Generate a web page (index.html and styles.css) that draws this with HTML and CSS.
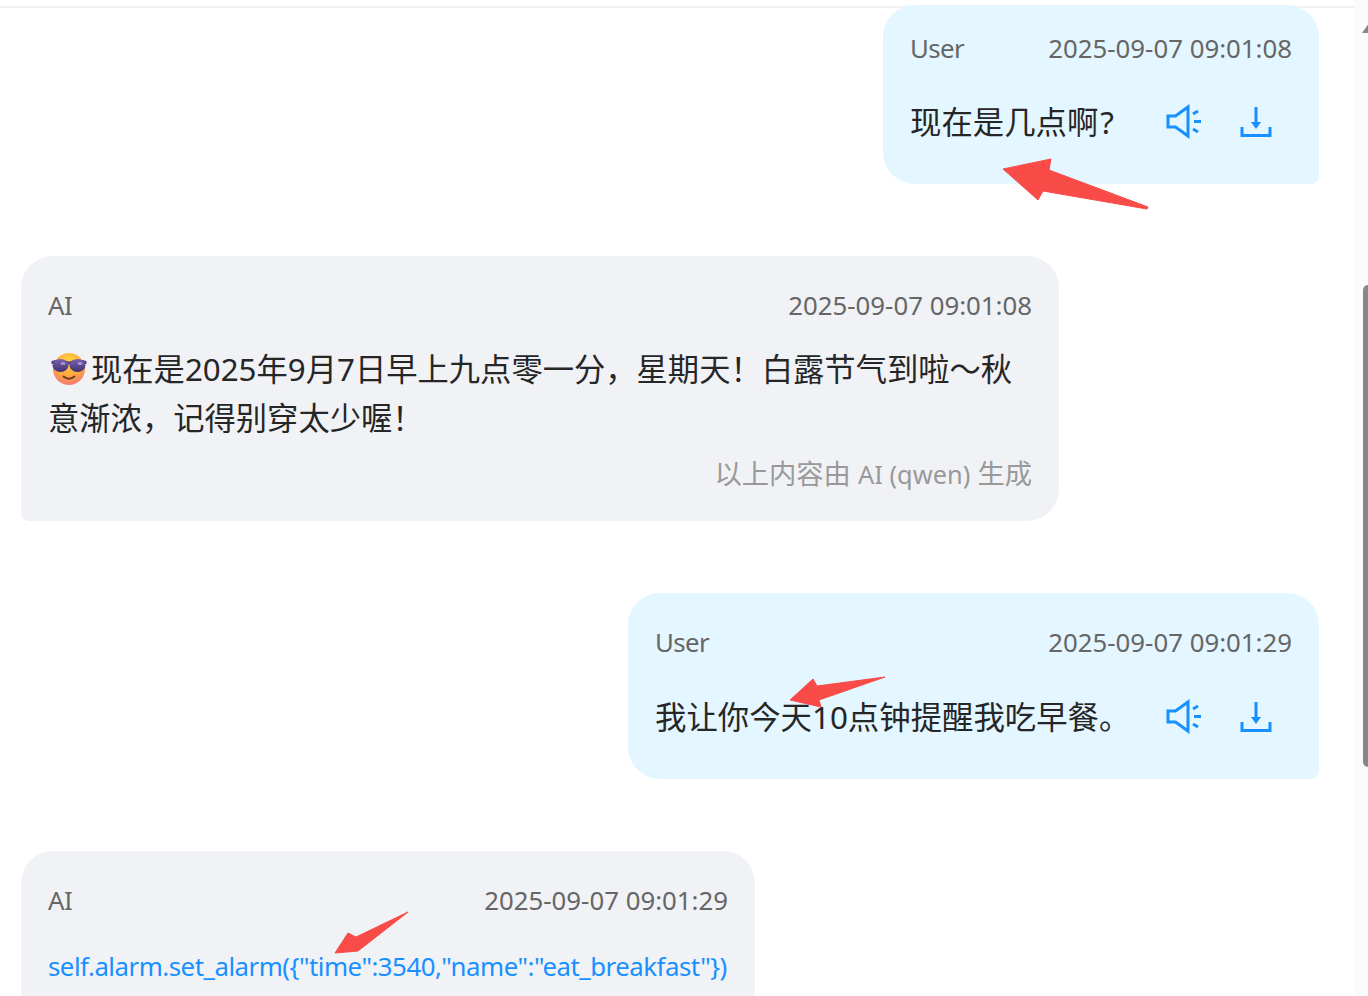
FILE: index.html
```html
<!DOCTYPE html>
<html lang="zh-CN">
<head>
<meta charset="utf-8">
<title>Chat</title>
<link rel="stylesheet" href="styles.css">
</head>
<body>
<div class="page">
  <div class="topbar"></div>
  <main class="chat">
    <article class="bubble user first w1">
      <header class="meta"><span class="who">User</span><time>2025-09-07 09:01:08</time></header>
      <div class="row">
        <p class="text">现在是几点啊<span class="qm">?</span></p>
        <div class="actions">
          <svg class="icon" viewBox="0 0 40 40"><path class="line" d="M4 15H11.500L24 6V35L11.500 26H4Z"/><path class="line" d="M29 13L34 10M30 20.500H37M29 28L34 31"/></svg>
          <svg class="icon" viewBox="0 0 40 40"><path class="line" d="M20 6V24M6 26V34.500H34V26"/><path class="fill" d="M15 21H25L20 28Z"/></svg>
        </div>
      </div>
    </article>

    <article class="bubble ai w2">
      <header class="meta"><span class="who">AI</span><time>2025-09-07 09:01:08</time></header>
      <p class="text answer"><svg class="emoji" viewBox="0 0 36 34">
        <defs>
          <radialGradient id="face" cx="50%" cy="25%" r="80%"><stop offset="0" stop-color="#ffd23f"/><stop offset=".6" stop-color="#fca63e"/><stop offset="1" stop-color="#f26f82"/></radialGradient>
          <linearGradient id="lens" x1="0" y1="0" x2="0" y2="1"><stop offset="0" stop-color="#7a62b0"/><stop offset="1" stop-color="#40306f"/></linearGradient>
        </defs>
        <circle cx="18" cy="17" r="16" fill="url(#face)"/>
        <path d="M0.500 9Q9 6.500 18 9.500Q27 6.500 35.500 9L35.500 12L18 12.500L0.500 12Z" fill="#5a438f"/>
        <ellipse cx="9.500" cy="13.500" rx="8" ry="6.500" fill="url(#lens)"/>
        <ellipse cx="26.500" cy="13.500" rx="8" ry="6.500" fill="url(#lens)"/>
        <ellipse cx="12" cy="11.500" rx="2.500" ry="1.500" fill="#a892d6"/>
        <ellipse cx="29" cy="11.500" rx="2.500" ry="1.500" fill="#a892d6"/>
        <path d="M12.500 24.500Q18 29 23.500 24.500" fill="none" stroke="#6b3a1e" stroke-width="1.800" stroke-linecap="round"/>
      </svg>现在是2025年9月7日早上九点零一分，星期天！白露节气到啦～秋意渐浓，记得别穿太少喔！</p>
      <footer class="note">以上内容由 <span class="latin">AI (qwen)</span> 生成</footer>
    </article>

    <article class="bubble user w3">
      <header class="meta"><span class="who">User</span><time>2025-09-07 09:01:29</time></header>
      <div class="row">
        <p class="text">我让你今天10点钟提醒我吃早餐。</p>
        <div class="actions">
          <svg class="icon" viewBox="0 0 40 40"><path class="line" d="M4 15H11.500L24 6V35L11.500 26H4Z"/><path class="line" d="M29 13L34 10M30 20.500H37M29 28L34 31"/></svg>
          <svg class="icon" viewBox="0 0 40 40"><path class="line" d="M20 6V24M6 26V34.500H34V26"/><path class="fill" d="M15 21H25L20 28Z"/></svg>
        </div>
      </div>
    </article>

    <article class="bubble ai w4">
      <header class="meta"><span class="who">AI</span><time>2025-09-07 09:01:29</time></header>
      <p class="text code">self.alarm.set_alarm({"time":3540,"name":"eat_breakfast"})</p>
    </article>
  </main>

  <svg class="marks" viewBox="0 0 1368 996">
    <path d="M1003 169L1051 159L1049 170L1148 207L1147 209L1043 191L1038 200Z"/>
    <path d="M790 700L813 679L817 686L885 677L819 700L821 707Z"/>
    <path d="M335 953L348 933L356 937L408 912L358 951Z"/>
  </svg>

  <div class="scrollbar">
    <div class="scroll-up"></div>
    <div class="scroll-thumb"></div>
  </div>
</div>
</body>
</html>
```

FILE: styles.css
```css
* { box-sizing: border-box; }
html, body { margin: 0; height: 100%; overflow: hidden; background: #fff; }
body { font-family: "Noto Sans", "Noto Sans CJK SC", sans-serif; }

.page { position: relative; width: 1368px; height: 996px; overflow: hidden; }

.topbar { height: 8px; margin-right: 13px; border-bottom: 2px solid #f0f0f0; }

.chat {
  position: relative;
  margin-top: -3px;
  padding: 0 49px 0 21px;
  display: flex;
  flex-direction: column;
  gap: 72px;
}

.bubble { padding: 27px 27px 27.500px; border-radius: 32px; flex: none; }
.user { align-self: flex-end; background: #e4f6ff; border-bottom-right-radius: 8px; }
.ai { align-self: flex-start; background: #f0f2f6; border-bottom-left-radius: 8px; }
.first { padding-top: 21px; }
.w1 { width: 436px; }
.w2 { width: 1038px; }
.w3 { width: 691px; }
.w4 { width: 734px; }

.meta {
  display: flex;
  justify-content: space-between;
  align-items: center;
  height: 44px;
  font-size: 25.800px;
  color: #666;
}
.who { letter-spacing: -0.600px; }

.row { display: flex; align-items: center; justify-content: space-between; height: 71px; margin-top: 16.500px; }
.first .row { margin-top: 15.500px; }
.row .text { margin: 0; }

.text { margin: 16.500px 0 0; font-size: 31.400px; line-height: 49px; color: #262626; }
.answer { margin-top: 17.500px; font-size: 31.300px; }
.qm { margin-left: 2px; }
.code { margin-top: 19.500px; color: #1890ff; font-size: 25.800px; letter-spacing: -0.490px; white-space: nowrap; }

.emoji { width: 36px; height: 34px; margin: 0 4px 0 3px; vertical-align: -5px; }

.note { margin-top: 11px; height: 40px; line-height: 40px; text-align: right; font-size: 27.300px; color: #999; }
.latin { font-size: 25.400px; }

.actions { display: flex; gap: 32px; margin-right: 16px; flex: none; }
.icon { width: 40px; height: 40px; display: block; }
.line { fill: none; stroke: #1890ff; stroke-width: 3; }
.fill { fill: #1890ff; }

.marks { position: absolute; inset: 0; width: 1368px; height: 996px; pointer-events: none; }
.marks path { fill: #f94b47; stroke: #f94b47; stroke-width: 1; stroke-linejoin: round; }

.scrollbar { position: absolute; top: 0; right: 0; bottom: 0; width: 13px; background: #fbfbfb; }
.scroll-up { position: absolute; top: 23px; left: 7px; width: 0; height: 0; border-style: solid; border-width: 0 7px 10px; border-color: transparent transparent #888; }
.scroll-thumb { position: absolute; top: 285px; left: 8px; width: 10px; height: 482px; border-radius: 5px; background: #888; }
```
